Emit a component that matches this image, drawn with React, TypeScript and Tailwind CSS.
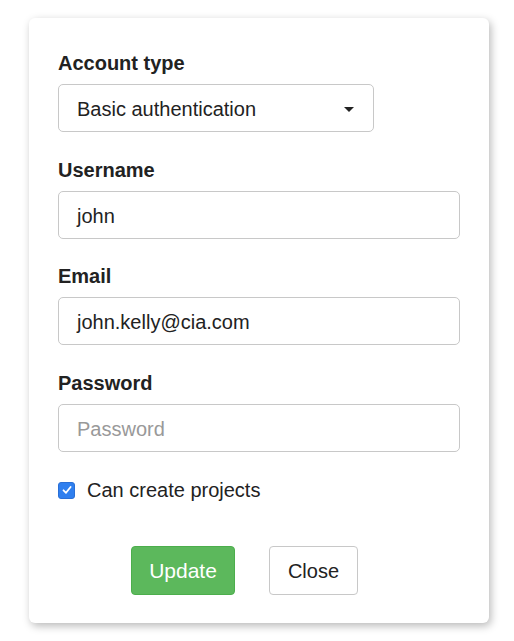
export default function App() {
  return (
    <div className="min-h-[641px] w-[514px] bg-white pt-[18px] pl-[29px] font-['Liberation_Sans',Arial,sans-serif] text-[#222]">
      <div className="w-[460px] h-[605px] rounded-[6px] bg-white shadow-[2px_3px_8px_rgba(0,0,0,0.28)] px-[29px] pt-[33px]">
        <Field label="Account type">
          <div className="relative flex items-center h-[48px] w-[316px] rounded-[5px] border border-[#c8c8c8] pl-[18px] pt-[2px] text-[20px] text-[#222]">
            Basic authentication
            <span className="absolute right-[19px] top-[22px] h-0 w-0 border-x-[5px] border-t-[5px] border-x-transparent border-t-[#222]" />
          </div>
        </Field>
        <Field label="Username" className="mt-[26px]">
          <Input value="john" />
        </Field>
        <Field label="Email" className="mt-[25px]">
          <Input value="john.kelly@cia.com" />
        </Field>
        <Field label="Password" className="mt-[26px]">
          <Input placeholder="Password" />
        </Field>

        <label className="mt-[26px] flex items-center h-[24px] text-[20px] text-[#222]">
          <span className="flex h-[17px] w-[17px] items-center justify-center rounded-[3px] bg-[#2f7fef] border border-[#2a6fd6]">
            <svg width="12" height="12" viewBox="0 0 12 12" fill="none">
              <path d="M2.5 6.3 L5 8.8 L9.6 3" stroke="white" strokeWidth="1.8" strokeLinecap="round" strokeLinejoin="round" />
            </svg>
          </span>
          <span className="ml-[12px]">Can create projects</span>
        </label>

        <div className="mt-[44px] flex pl-[73px] gap-[34px]">
          <button className="h-[49px] w-[104px] rounded-[4px] border border-[#4cae4c] bg-[#5cb85c] pt-[1px] text-[21px] text-white">
            Update
          </button>
          <button className="h-[49px] w-[89px] rounded-[4px] border border-[#c8c8c8] bg-white pt-[1px] text-[20px] text-[#222]">
            Close
          </button>
        </div>
      </div>
    </div>
  );
}

function Field({ label, children, className = "" }: { label: string; children: React.ReactNode; className?: string }) {
  return (
    <div className={className}>
      <div className="h-[24px] leading-[24px] text-[20px] font-bold text-[#222] mb-[9px]">{label}</div>
      {children}
    </div>
  );
}

function Input({ value, placeholder }: { value?: string; placeholder?: string }) {
  return (
    <div className="flex items-center h-[48px] w-[402px] rounded-[5px] border border-[#c8c8c8] pl-[18px] pt-[2px] text-[20px]">
      {value ? <span className="text-[#222]">{value}</span> : <span className="text-[#999]">{placeholder}</span>}
    </div>
  );
}
